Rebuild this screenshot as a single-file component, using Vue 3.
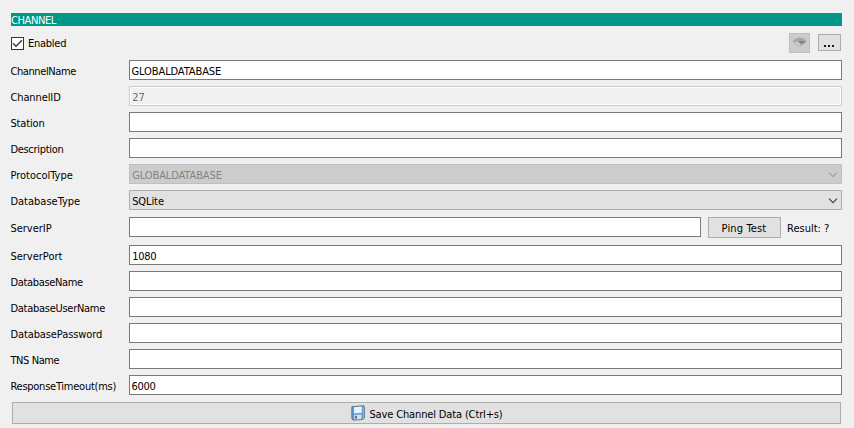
<script setup>
import { ref, reactive } from 'vue'

const enabled = ref(true)
// `track` is the letter spacing of a label, in pixels
const upper = reactive([
  { label: 'ChannelName', track: -0.4, value: 'GLOBALDATABASE', kind: 'text' },
  { label: 'ChannelID', track: -0.1, value: '27', kind: 'readonly', inset: true },
  { label: 'Station', track: -0.15, value: '', kind: 'text' },
  { label: 'Description', track: -0.3, value: '', kind: 'text' },
  { label: 'ProtocolType', track: 0, value: 'GLOBALDATABASE', kind: 'select', disabled: true, inset: true },
  { label: 'DatabaseType', track: 0, value: 'SQLite', kind: 'select', inset: true },
])
const lower = reactive([
  { label: 'ServerPort', track: 0, value: '1080', kind: 'text', inset: true },
  { label: 'DatabaseName', track: -0.33, value: '', kind: 'text' },
  { label: 'DatabaseUserName', track: -0.27, value: '', kind: 'text' },
  { label: 'DatabasePassword', track: -0.1, value: '', kind: 'text' },
  { label: 'TNS Name', track: -0.4, value: '', kind: 'text' },
  { label: 'ResponseTimeout(ms)', track: -0.25, value: '6000', kind: 'text' },
])
</script>

<template>
  <main class="panel">
    <h1 class="banner">CHANNEL</h1>
    <div class="toolbar">
      <label class="check" @click="enabled = !enabled">
        <span class="box">
          <svg v-if="enabled" width="11" height="11" viewBox="0 0 11 11"><path d="M1 5.3 4 8.3 10 2.3" fill="none" stroke="#333" stroke-width="1.3" /></svg>
        </span>
        <span>Enabled</span>
      </label>
      <div class="tools">
        <button class="btn view" disabled>
          <svg width="15" height="11" viewBox="0 0 15 11">
            <path d="M0 4.5 3 1.5 8 0 13 2 15 4 12.5 7 7 10.5 3.5 7.5Z" fill="#b9b9b9" />
            <path d="M1 4 5 1.5 9 1 13 3 11 5 7 4 3 5.5Z" fill="#a5a5a5" />
            <path d="M6 4H14L12 6 9 7.5Z" fill="#858585" />
            <path d="M2 5 6 4.5 9 7.5 7 9 4 7Z" fill="#c5c5c5" />
          </svg>
        </button>
        <button class="btn more"><i></i><i></i><i></i></button>
      </div>
    </div>

    <div class="rows">
      <div v-for="f in upper" :key="f.label" class="row">
        <span class="label" :style="{ letterSpacing: f.track + 'px' }">{{ f.label }}</span>
        <div class="field" :class="[f.kind, { disabled: f.disabled, inset: f.inset }]">
          <span>{{ f.value }}</span>
          <svg v-if="f.kind === 'select'" class="chevron" width="10" height="6" viewBox="0 0 10 6"><path d="M1 .7 5 4.7 9 .7" fill="none" stroke="currentColor" stroke-width="1.2" /></svg>
        </div>
      </div>
    </div>

    <div class="row server">
      <span class="label">ServerIP</span>
      <div class="field text"></div>
      <button class="btn ping">Ping Test</button>
      <span class="result">Result: ?</span>
    </div>

    <div class="rows">
      <div v-for="f in lower" :key="f.label" class="row">
        <span class="label" :style="{ letterSpacing: f.track + 'px' }">{{ f.label }}</span>
        <div class="field number" :class="[f.kind, { inset: f.inset }]"><span>{{ f.value }}</span></div>
      </div>
    </div>

    <button class="btn save">
      <svg width="14" height="16" viewBox="0 0 14 16">
        <path d="M.8 1.8 12.6.7 13.4 2V13L11.5 14.5 2 15.2.8 13.7Z" fill="#5a9bd3" stroke="#566679" stroke-width=".8" />
        <path d="M3 2.2 10.8 1.5V7.8L3 8.4Z" fill="#edf3f8" />
        <path d="M3.2 10 10.4 9.4V14L3.2 14.6Z" fill="#dde1e5" />
        <path d="M4.2 10.9 5.8 10.7V13.6L4.2 13.8Z" fill="#3d5a78" />
        <path d="M12.3 2V13" stroke="#8ac4ec" stroke-width=".9" />
      </svg>
      <span>Save Channel Data (Ctrl+s)</span>
    </button>
  </main>
</template>

<style>
body { background: #f0f0f0; overflow: hidden; }
</style>

<style scoped>
.panel {
  box-sizing: border-box;
  height: 428px;
  padding: 13px 12px 0 11px;
  font: 11px/13px Tahoma, "DejaVu Sans Condensed", "DejaVu Sans", sans-serif;
  font-stretch: condensed;
  color: #000;
  white-space: nowrap;
  background: #f0f0f0;
}
.banner { margin: 0; height: 13px; font: inherit; font-stretch: condensed; line-height: 15px; letter-spacing: -.4px; color: #fff; background: #009688; }
.toolbar { display: flex; justify-content: space-between; height: 34px; padding-top: 7px; box-sizing: border-box; }
.check { display: flex; gap: 4px; height: 20px; align-items: center; letter-spacing: -.25px; }
.box { box-sizing: border-box; width: 13px; height: 13px; border: 1px solid #333; background: #fff; }
.box svg { display: block; }
.tools { display: flex; gap: 8px; align-items: flex-start; height: 20px; padding-right: 1px; }
.btn { box-sizing: border-box; display: flex; align-items: center; justify-content: center; margin: 0; padding: 0; border: 1px solid #adadad; background: #e1e1e1; color: #000; font: inherit; font-stretch: condensed; }
.view { width: 21px; height: 20px; padding-bottom: 1px; background: #ccc; border-color: #bfbfbf; }
.more { width: 23px; height: 17px; margin-top: 1px; gap: 2px; align-items: flex-end; padding: 0 1px 3px 0; }
.more i { width: 2px; height: 2px; background: #181838; }
.rows { display: grid; gap: 6px; }
.row { display: grid; grid-template-columns: 118px 1fr; height: 20px; }
.label { line-height: 23px; margin-left: -.6px; }
.field { box-sizing: border-box; display: flex; justify-content: space-between; height: 20px; border: 1px solid #7a7a7a; background: #fff; padding: 0 3px 0 1.5px; line-height: 21px; letter-spacing: -.1px; }
.field.inset { padding-left: 2.2px; }
.field.number { letter-spacing: -.3px; }
.readonly { border-color: #ccc; background: #f0f0f0; color: #6d6d6d; box-shadow: inset 0 0 0 1px #fff; }
.select { border-color: #adadad; background: #e1e1e1; }
.disabled { border-color: #bfbfbf; background: #ccc; color: #838383; }
.chevron { align-self: center; margin-top: 2px; color: #444; }
.disabled .chevron { color: #a0a0a0; }
.server { grid-template-columns: 118px 572px 73px 1fr; height: 21px; margin: 7px 0; }
.server .ping { margin-left: 7px; width: 73px; height: 21px; padding: 1px 1px 0 0; letter-spacing: .15px; }
.result { padding-left: 13px; line-height: 23px; }
.save { width: 829px; height: 22px; margin: 7px 0 0 1px; gap: 4px; }
.save span { padding-top: 2px; letter-spacing: -.14px; }
.save svg { margin-left: 1px; }
</style>
